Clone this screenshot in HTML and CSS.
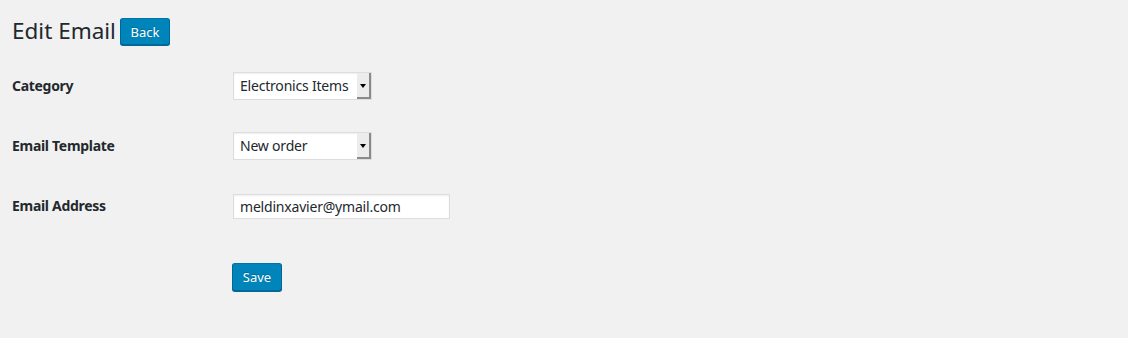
FILE: index.html
```html
<!DOCTYPE html>
<html>
<head>
<meta charset="utf-8">
<link rel="stylesheet" href="styles.css">
</head>
<body>
<div class="wrap">
  <div class="heading">
    <h1 class="title">Edit Email</h1>
    <a class="btn btn-back">Back</a>
  </div>
  <div class="form">
    <div class="row">
      <div class="label">Category</div>
      <div class="field">
        <div class="select">
          <span class="select-value">Electronics Items</span>
          <span class="select-btn"><span class="arrow"></span></span>
        </div>
      </div>
    </div>
    <div class="row">
      <div class="label">Email Template</div>
      <div class="field">
        <div class="select">
          <span class="select-value">New order</span>
          <span class="select-btn"><span class="arrow"></span></span>
        </div>
      </div>
    </div>
    <div class="row">
      <div class="label">Email Address</div>
      <div class="field">
        <div class="input">meldinxavier@ymail.com</div>
      </div>
    </div>
  </div>
  <div class="submit">
    <a class="btn btn-save">Save</a>
  </div>
</div>
</body>
</html>
```

FILE: styles.css
```css
html, body {
  margin: 0;
  padding: 0;
  background: #f1f1f1;
}
body {
  font-family: "Noto Sans", "Open Sans", sans-serif;
  color: #23282d;
  font-size: 14px;
  width: 1128px;
  height: 338px;
  overflow: hidden;
}
.wrap {
  padding: 17px 0 0 12px;
}
.heading {
  display: flex;
  align-items: center;
  gap: 4px;
  height: 28px;
}
.title {
  margin: 0;
  font-size: 22.5px;
  font-weight: 400;
  line-height: 28px;
  letter-spacing: 0;
  color: #23282d;
}
.btn {
  box-sizing: border-box;
  display: flex;
  align-items: center;
  justify-content: center;
  background: #0085ba;
  border: 1px solid #0073aa;
  border-color: #0073aa #006799 #006799;
  border-radius: 3px;
  box-shadow: 0 1px 0 #006799;
  color: #fff;
  font-size: 13px;
  text-shadow: 0 -1px 1px #006799;
}
.btn-back {
  width: 50px;
  height: 27px;
  margin-top: 1px;
}
.form {
  margin-top: 11px;
  display: flex;
  flex-direction: column;
}
.row {
  display: flex;
  align-items: center;
  height: 60px;
}
.label {
  width: 221px;
  font-weight: 700;
  font-size: 14px;
  letter-spacing: -0.3px;
  margin-top: -1px;
}
.field {
  display: flex;
  align-items: center;
}
.select {
  box-sizing: border-box;
  width: 139px;
  height: 28px;
  display: flex;
  background: #fff;
  border: 1px solid #ddd;
  box-shadow: inset 0 1px 2px rgba(0,0,0,0.07);
}
.select-value {
  flex: 1;
  padding-left: 6px;
  line-height: 26px;
  font-size: 14px;
  letter-spacing: -0.2px;
  white-space: nowrap;
  overflow: hidden;
}
.select-btn {
  box-sizing: border-box;
  width: 14px;
  height: 26px;
  background: #ececec;
  border-right: 2px solid #8a8a8a;
  border-bottom: 2px solid #8a8a8a;
  display: flex;
  align-items: center;
  justify-content: center;
}
.arrow {
  width: 0;
  height: 0;
  border-left: 3px solid transparent;
  border-right: 3px solid transparent;
  border-top: 4px solid #000;
  margin-top: 2px;
}
.input {
  box-sizing: border-box;
  width: 217px;
  height: 25px;
  background: #fff;
  border: 1px solid #ddd;
  box-shadow: inset 0 1px 2px rgba(0,0,0,0.07);
  padding-left: 6px;
  line-height: 23px;
  font-size: 14px;
  letter-spacing: -0.2px;
}
.submit {
  margin-top: 27px;
  padding-left: 220px;
}
.btn-save {
  width: 50px;
  height: 28px;
}
```
